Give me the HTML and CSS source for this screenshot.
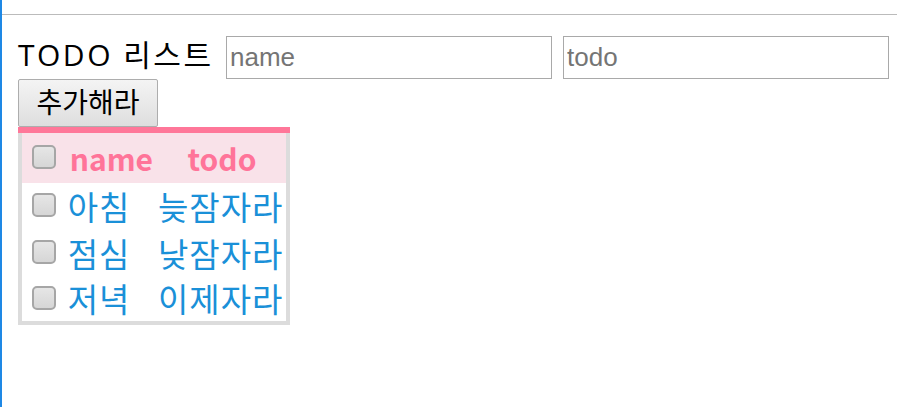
FILE: index.html
```html
<!DOCTYPE html>
<html lang="ko">
<head>
<meta charset="utf-8">
<title>TODO 리스트</title>
<link rel="stylesheet" href="styles.css">
</head>
<body>
<div class="rule"></div>
<main class="app">
  <div class="form">
    <h1 class="title">TODO 리스트</h1>
    <input class="field" type="text" placeholder="name">
    <input class="field" type="text" placeholder="todo">
  </div>
  <button class="add" type="button">추가해라</button>
  <div class="list">
    <table class="todos">
      <thead>
        <tr class="head">
          <th class="cb"><input class="check" type="checkbox"></th>
          <th class="c-name">name</th>
          <th class="c-todo">todo</th>
        </tr>
      </thead>
      <tbody>
        <tr><td class="cb"><input class="check" type="checkbox"></td><td class="c-name">아침</td><td class="c-todo">늦잠자라</td></tr>
        <tr><td class="cb"><input class="check" type="checkbox"></td><td class="c-name">점심</td><td class="c-todo">낮잠자라</td></tr>
        <tr><td class="cb"><input class="check" type="checkbox"></td><td class="c-name">저녁</td><td class="c-todo">이제자라</td></tr>
      </tbody>
    </table>
  </div>
</main>
</body>
</html>
```

FILE: styles.css
```css
html, body {
  margin: 0;
  padding: 0;
  height: 100%;
}
body {
  border-left: 2px solid #1e88e5;
  box-sizing: border-box;
  background: #fff;
  font-family: "Open Sans", "Noto Sans CJK KR", sans-serif;
  color: #000;
}
.rule {
  height: 14px;
  border-bottom: 1px solid #bbbbbb;
}
.app {
  padding: 21px 0 0 16px;
}
.form {
  display: flex;
  align-items: flex-start;
  gap: 11px;
}
.title {
  flex: none;
  width: 196px;
  margin: 0 1px 0 0;
  white-space: nowrap;
  font-size: 30px;
  font-weight: 400;
  letter-spacing: 2.5px;
  line-height: 38px;
  height: 43px;
}
.field {
  flex: none;
  box-sizing: border-box;
  width: 326px;
  height: 43px;
  margin: 0;
  padding: 0 3px;
  border: 1px solid #a9a9a9;
  font-family: "Liberation Sans", Arial, sans-serif;
  font-size: 26px;
  color: #000;
}
.field::placeholder {
  color: #757575;
}
.add {
  display: block;
  box-sizing: border-box;
  width: 140px;
  height: 48px;
  margin: 0;
  padding: 0 0 4px;
  border: 1px solid #adadad;
  border-radius: 2px;
  background: linear-gradient(#f4f4f4, #dedede);
  font-family: "Noto Sans CJK KR", sans-serif;
  font-size: 28px;
  color: #000;
}
.list {
  display: inline-block;
  border-top: 6px solid #ff7799;
}
.todos {
  border-collapse: collapse;
  border: 4px solid #dcdcdc;
  border-top: 0;
  font-family: "Noto Sans CJK KR", sans-serif;
  font-size: 33px;
  letter-spacing: 1px;
  table-layout: fixed;
  width: 272px;
}
.head {
  background: #f9e2e9;
  height: 50px;
}
.todos th {
  color: #ff7499;
  font-weight: 700;
  font-size: 30px;
  letter-spacing: 0;
  text-align: center;
}
.todos td {
  color: #1a90d8;
  height: 46.7px;
  text-align: left;
}
.todos th, .todos td {
  box-sizing: border-box;
  padding: 0 0 0 3px;
  line-height: 1;
  vertical-align: middle;
}
.todos .cb {
  width: 44px;
  padding: 0 0 0 10px;
}
.c-name {
  width: 89px;
}
.c-todo {
  width: 131px;
}
.check {
  appearance: none;
  -webkit-appearance: none;
  box-sizing: border-box;
  display: block;
  width: 24px;
  height: 24px;
  margin: 0 0 2px;
  border: 2px solid #a6a6a6;
  border-radius: 5px;
  background: linear-gradient(#e6e6e6, #d6d6d6);
}
```
